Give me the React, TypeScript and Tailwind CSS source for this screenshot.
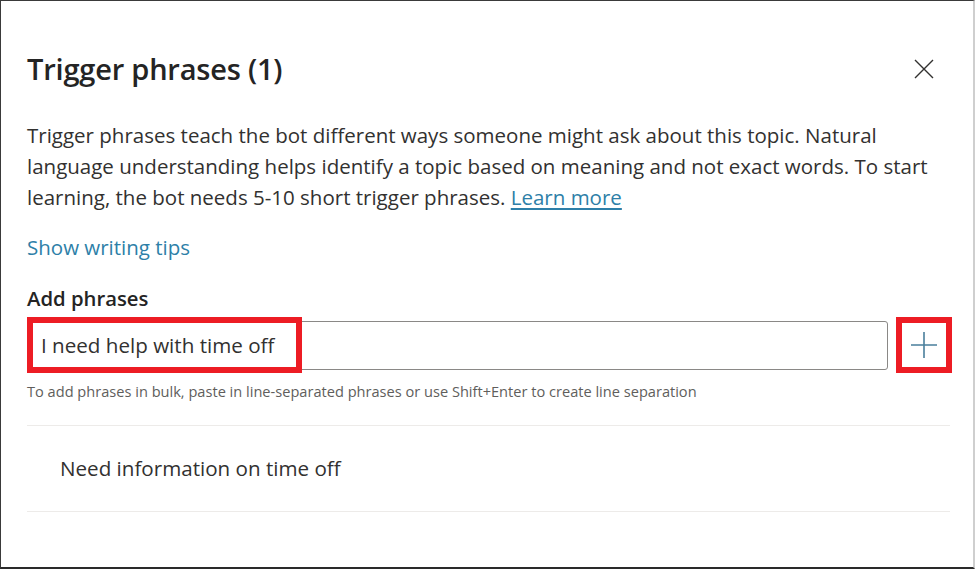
import React from "react";

export default function App() {
  const font = { fontFamily: '"Open Sans", "Noto Sans", sans-serif' };
  return (
    <div
      className="w-[975px] h-[569px] bg-white border-l border-t border-b-2 border-r-2 border-l-[#3a3a3a] border-t-[#3a3a3a] border-b-[#2a2a2a] border-r-[#cfcfcf] pl-[26px] pr-[23px] text-[#323130] overflow-hidden"
      style={font}
    >
      <div className="mt-[49px] h-[38px] flex items-center justify-between">
        <h1 className="text-[29px] leading-[38px] font-semibold text-[#242424] tracking-[-0.2px]">
          Trigger phrases (1)
        </h1>
        <button className="w-[24px] h-[24px] mr-[14px] flex items-center justify-center text-[#323130]">
          <svg width="20" height="20" viewBox="0 0 20 20" fill="none" stroke="currentColor" strokeWidth="1.4">
            <path d="M1 1 L19 19 M19 1 L1 19" />
          </svg>
        </button>
      </div>

      <p className="mt-[32px] text-[20.5px] leading-[31px] whitespace-nowrap">
        <span className="block">
          Trigger phrases teach the bot different ways someone might ask about this topic. Natural
        </span>
        <span className="block">
          language understanding helps identify a topic based on meaning and not exact words. To start
        </span>
        <span className="block">
          learning, the bot needs 5-10 short trigger phrases.{" "}
          <a className="text-[#2e7fa8] underline underline-offset-[3px]">Learn more</a>
        </span>
      </p>

      <div className="mt-[19px] text-[20.5px] leading-[31px] text-[#2e7fa8]">Show writing tips</div>

      <div className="mt-[20px] text-[20.3px] leading-[30px] font-semibold text-[#242424]">Add phrases</div>

      <div className="relative mt-[4px] h-[56px] flex items-center">
        <div className="flex-1 h-[49px] border border-[#8a8886] rounded-[3px] flex items-center pl-[13px] text-[20.6px] text-[#323130]">
          I need help with time off
        </div>
        <div className="ml-[8px] -mr-[2px] w-[56px] h-[56px] border-[6px] border-[#ed1c24] flex items-center justify-center">
          <svg width="26" height="26" viewBox="0 0 26 26" fill="none" stroke="#4a7f9c" strokeWidth="1.6">
            <path d="M13 0 V26 M0 13 H26" />
          </svg>
        </div>
        <div className="absolute left-0 top-0 w-[275px] h-[56px] border-[6px] border-[#ed1c24]" />
      </div>

      <div className="mt-[7px] text-[14.6px] leading-[22px] text-[#605e5c] whitespace-nowrap">
        To add phrases in bulk, paste in line-separated phrases or use Shift+Enter to create line separation
      </div>

      <div className="mt-[23px] border-t border-[#edebe9]" />
      <div className="h-[85px] flex items-center pl-[33px] text-[20.6px] text-[#323130]">
        Need information on time off
      </div>
      <div className="border-t border-[#edebe9]" />
    </div>
  );
}
